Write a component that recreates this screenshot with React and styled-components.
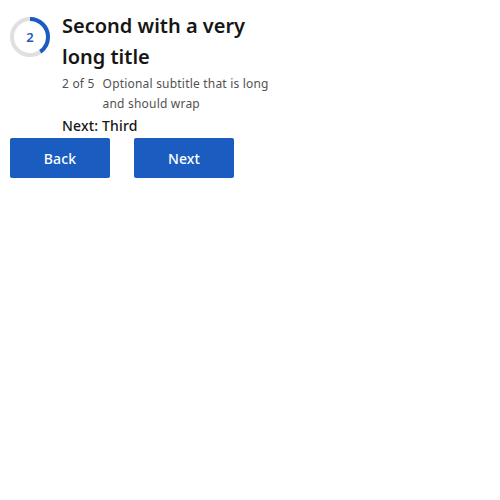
import styled, { createGlobalStyle } from "styled-components";

const GlobalStyle = createGlobalStyle`
  html, body {
    margin: 0;
    padding: 0;
    background: #fff;
    font-family: "Noto Sans", "Open Sans", sans-serif;
  }
`;

const Page = styled.div`
  padding: 10px;
`;

const Header = styled.div`
  display: flex;
  align-items: flex-start;
  gap: 12px;
`;

const Ring = styled.div`
  position: relative;
  width: 40px;
  height: 40px;
  margin-top: 7px;
  flex: none;
`;

const RingLabel = styled.span`
  position: absolute;
  inset: 0;
  display: flex;
  align-items: center;
  justify-content: center;
  font-size: 13px;
  font-weight: 600;
  color: #1a5cbf;
`;

const Body = styled.div`
  width: 210px;
`;

const Title = styled.h2`
  margin: 0;
  font-size: 20px;
  line-height: 31px;
  font-weight: 600;
  color: #161616;
`;

const Meta = styled.div`
  display: flex;
  gap: 8px;
  margin-top: 2px;
  font-size: 12px;
  line-height: 20px;
  letter-spacing: 0.2px;
  color: #525252;
`;

const Count = styled.span`
  flex: none;
`;

const NextLabel = styled.div`
  margin-top: 2px;
  font-size: 14px;
  line-height: 20px;
  font-weight: 500;
  letter-spacing: 0.16px;
  color: #161616;
`;

const Actions = styled.div`
  display: flex;
  gap: 24px;
  margin-top: 2px;
`;

const Button = styled.button`
  width: 100px;
  height: 40px;
  border: none;
  border-radius: 2px;
  background: #1a5cbf;
  color: #fff;
  font-family: inherit;
  font-size: 14px;
  font-weight: 500;
  letter-spacing: 0.16px;
  cursor: pointer;
`;

function ProgressRing({ step, total }) {
  const r = 18;
  const c = 2 * Math.PI * r;
  const filled = (step / total) * c;
  return (
    <Ring>
      <svg width="40" height="40" viewBox="0 0 40 40">
        <circle cx="20" cy="20" r={r} fill="none" stroke="#e0e0e0" strokeWidth="4" />
        <circle
          cx="20"
          cy="20"
          r={r}
          fill="none"
          stroke="#1a5cbf"
          strokeWidth="4"
          strokeDasharray={`${filled} ${c}`}
          transform="rotate(-90 20 20)"
        />
      </svg>
      <RingLabel>{step}</RingLabel>
    </Ring>
  );
}

export default function App() {
  return (
    <>
      <GlobalStyle />
      <Page>
        <Header>
          <ProgressRing step={2} total={5} />
          <Body>
            <Title>Second with a very long title</Title>
            <Meta>
              <Count>2 of 5</Count>
              <span>Optional subtitle that is long and should wrap</span>
            </Meta>
            <NextLabel>Next: Third</NextLabel>
          </Body>
        </Header>
        <Actions>
          <Button>Back</Button>
          <Button>Next</Button>
        </Actions>
      </Page>
    </>
  );
}
